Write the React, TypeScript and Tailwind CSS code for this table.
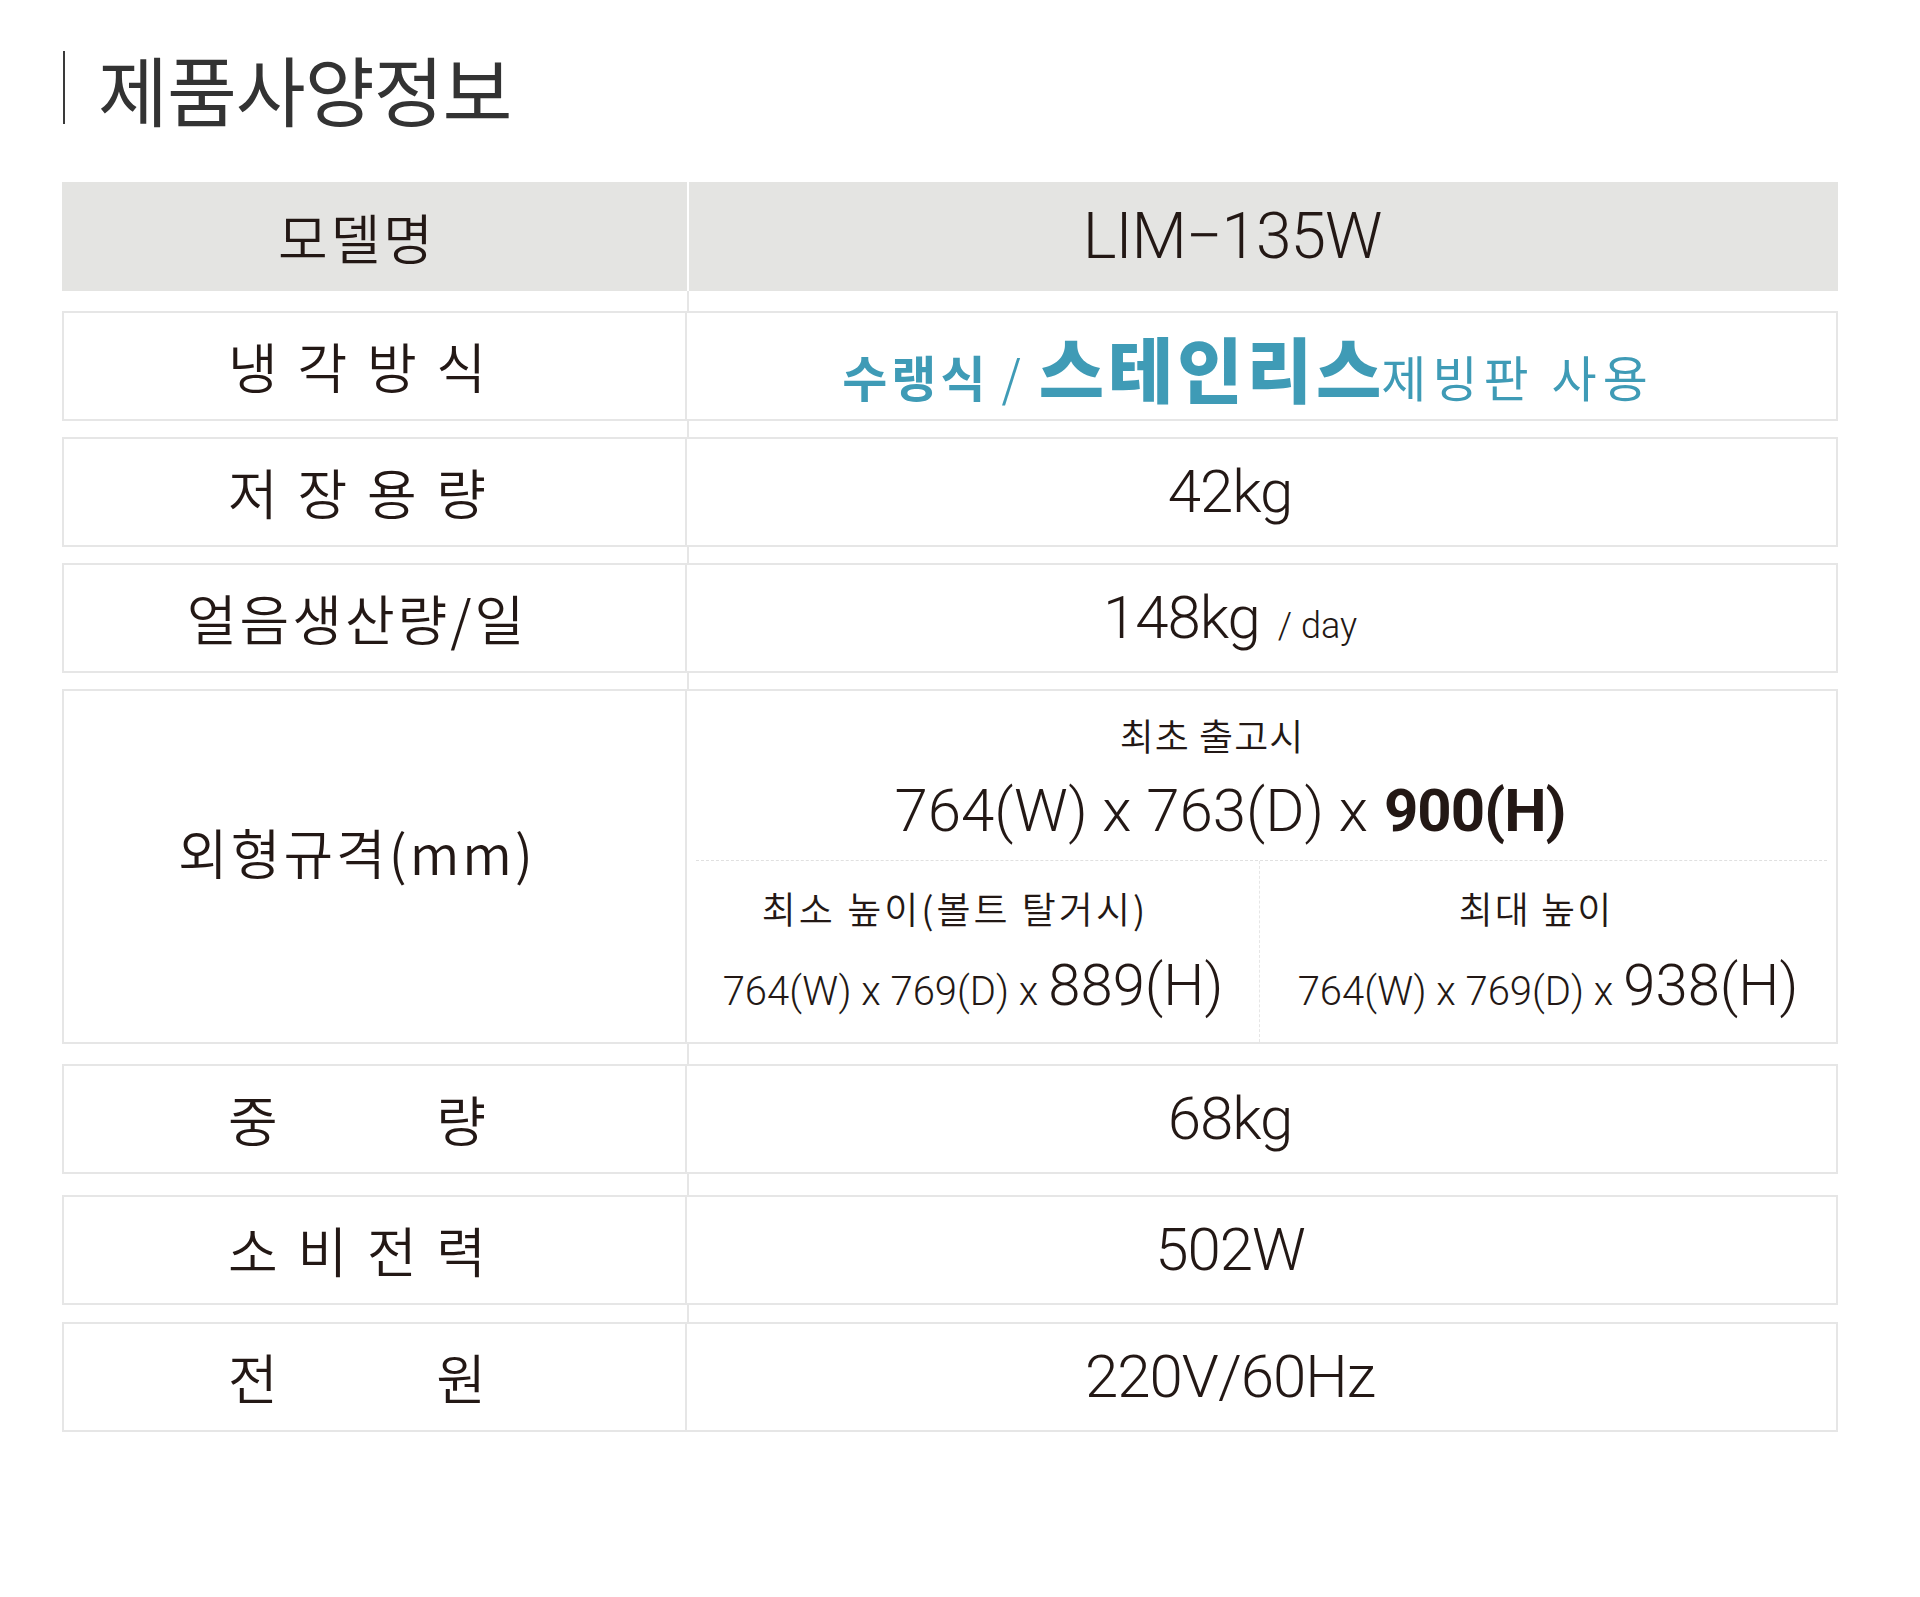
import React from "react";

const KO = "font-['Noto_Sans_CJK_KR',sans-serif]";
const NUM = "font-['Roboto','Noto_Sans_CJK_KR',sans-serif]";

function Spacer({ h }: { h: string }) {
  return (
    <div className={`flex ${h}`}>
      <div className="w-[627px] border-r-2 border-[#e6e6e6]" />
    </div>
  );
}

function Label({ children, spread }: { children: React.ReactNode; spread?: boolean }) {
  return (
    <div className="w-[623px] border-r-2 border-[#e6e6e6] flex items-center justify-center pr-[35px]">
      <div
        className={`${KO} text-[54px] leading-none font-[350] text-[#231815] ${
          spread ? "w-[258px] flex justify-between" : "tracking-[3px]"
        }`}
      >
        {children}
      </div>
    </div>
  );
}

function Row({ label, spread, children, h = "h-[110px]" }: { label: React.ReactNode; spread?: boolean; children: React.ReactNode; h?: string }) {
  return (
    <div className={`flex ${h} border-2 border-[#e6e6e6]`}>
      <Label spread={spread}>{label}</Label>
      <div className="flex-1 flex items-center justify-center pr-[63px]">{children}</div>
    </div>
  );
}

function Val({ children }: { children: React.ReactNode }) {
  return <span className={`${NUM} text-[60px] leading-none font-light text-[#231815] tracking-[-1px]`}>{children}</span>;
}

function chars(s: string) {
  return s.split("").map((c, i) => <span key={i}>{c}</span>);
}

export default function App() {
  return (
    <div className="w-[1920px] h-[1597px] bg-white">
      <div className="flex items-center ml-[63px] pt-[51px] h-[124px]">
        <div className="w-[2px] h-[73px] bg-[#3a3a3a]" />
        <span className={`${KO} ml-[33px] text-[76px] leading-none text-[#333333] tracking-[-1px]`}>제품사양정보</span>
      </div>

      <div className="ml-[62px] w-[1776px] mt-[58px]">
        {/* header */}
        <div className="flex h-[109px]">
          <div className="w-[625px] bg-[#e4e4e2] flex items-center justify-center pr-[35px]">
            <span className={`${KO} text-[54px] leading-none font-[350] tracking-[3px] text-[#231815]`}>모델명</span>
          </div>
          <div className="w-[2px] bg-white" />
          <div className="flex-1 bg-[#e4e4e2] flex items-center justify-center pr-[63px]">
            <span className={`${NUM} text-[64px] leading-none font-light text-[#231815] tracking-[-1px]`}>LIM−135W</span>
          </div>
        </div>
        <Spacer h="h-[20px]" />

        <Row label={chars("냉각방식")} spread>
          <div className={`${KO} flex items-baseline text-[#3f9bb6] pl-[36px]`}>
            <span className="text-[49px] font-bold leading-none tracking-[4px]">수랭식</span>
            <span className="text-[49px] leading-none ml-[12px] font-[350]">/</span>
            <span className="text-[71px] font-black leading-none ml-[18px] tracking-[4px]">스테인리스</span>
            <span className="text-[49px] leading-none tracking-[6px] -ml-[4px]">제빙판 사용</span>
          </div>
        </Row>
        <Spacer h="h-[16px]" />

        <Row label={chars("저장용량")} spread>
          <Val>42kg</Val>
        </Row>
        <Spacer h="h-[16px]" />

        <Row label="얼음생산량/일">
          <div className="flex items-baseline">
            <Val>148kg</Val>
            <span className={`${NUM} text-[36px] leading-none font-light text-[#231815] ml-[18px]`}>/ day</span>
          </div>
        </Row>
        <Spacer h="h-[16px]" />

        {/* dimensions row */}
        <div className="flex h-[355px] border-2 border-[#e6e6e6]">
          <div className="w-[623px] border-r-2 border-[#e6e6e6] flex items-center justify-center pr-[35px] pb-[30px]">
            <span className={`${KO} text-[54px] leading-none font-[350] tracking-[3px] text-[#231815]`}>외형규격(mm)</span>
          </div>
          <div className="flex-1 flex flex-col">
            <div className="h-[169px] flex flex-col items-center pt-[24px] pr-[63px]">
              <span className={`${KO} text-[37px] leading-[40px] font-[350] tracking-[1px] text-[#231815] mr-[36px]`}>최초 출고시</span>
              <div className="mt-[26px] flex items-baseline">
                <span className={`${NUM} text-[60px] leading-none font-light text-[#231815]`}>764(W) x 763(D) x </span>
                <span className={`${NUM} text-[60px] leading-none font-bold text-[#231815] tracking-[-1px] ml-[16px]`}>900(H)</span>
              </div>
            </div>
            <div className="mx-[9px] border-t border-dashed border-[#e0e0e0]" />
            <div className="flex-1 grid grid-cols-[573px_1fr]">
              <div className="border-r border-dashed border-[#e6e6e6] flex flex-col items-center pt-[27px]">
                <span className={`${KO} text-[37px] leading-[40px] font-[350] tracking-[3px] text-[#231815] mr-[36px]`}>최소 높이(볼트 탈거시)</span>
                <div className="mt-[28px] flex items-baseline">
                  <span className={`${NUM} text-[40px] leading-none font-light text-[#231815]`}>764(W) x 769(D) x</span>
                  <span className={`${NUM} text-[58px] leading-none font-light text-[#231815] ml-[10px]`}>889(H)</span>
                </div>
              </div>
              <div className="flex flex-col items-center pt-[27px]">
                <span className={`${KO} text-[37px] leading-[40px] font-[350] tracking-[2px] text-[#231815] mr-[24px]`}>최대 높이</span>
                <div className="mt-[28px] flex items-baseline">
                  <span className={`${NUM} text-[40px] leading-none font-light text-[#231815]`}>764(W) x 769(D) x</span>
                  <span className={`${NUM} text-[58px] leading-none font-light text-[#231815] ml-[10px]`}>938(H)</span>
                </div>
              </div>
            </div>
          </div>
        </div>
        <Spacer h="h-[20px]" />

        <Row label={chars("중량")} spread>
          <Val>68kg</Val>
        </Row>
        <Spacer h="h-[21px]" />

        <Row label={chars("소비전력")} spread>
          <Val>502W</Val>
        </Row>
        <Spacer h="h-[17px]" />

        <Row label={chars("전원")} spread>
          <Val>220V/60Hz</Val>
        </Row>
      </div>
    </div>
  );
}
